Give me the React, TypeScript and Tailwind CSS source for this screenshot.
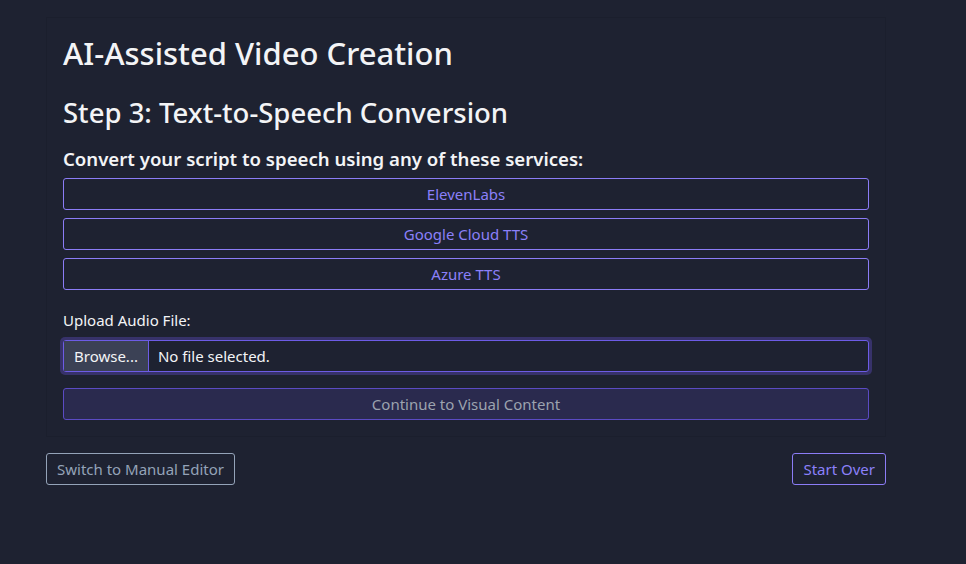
const services = ['ElevenLabs', 'Google Cloud TTS', 'Azure TTS']

export default function App() {
  return (
    <div className="min-h-[564px] bg-[#1e2231] pt-[17px] font-['Noto_Sans',sans-serif] text-[#f3f4f6]">
      <div className="ml-[46px] flex w-[840px] flex-col">
        <div className="border border-[#1b1f2d] px-4 pt-[15px] pb-4">
          <h1 className="text-[31px] leading-[40px] font-medium">AI-Assisted Video Creation</h1>
          <h2 className="mt-[23px] text-[27.5px] leading-[34px] font-medium">
            Step 3: Text-to-Speech Conversion
          </h2>
          <p className="mt-[16px] text-[18.6px] leading-[26px] font-semibold">
            Convert your script to speech using any of these services:
          </p>
          <div className="mt-[6px] flex flex-col gap-2">
            {services.map((s) => (
              <button
                key={s}
                className="h-[32px] w-full rounded-[3px] border border-[#8b7cf6] text-[15px] text-[#8b80f9]"
              >
                {s}
              </button>
            ))}
          </div>
          <label className="mt-[19px] block text-[15px] leading-[22px]">Upload Audio File:</label>
          <div className="-mx-[3px] mt-[6px] rounded-[5px] bg-[#37326a] p-[3px]">
            <div className="flex h-[32px] items-stretch rounded-[3px] border border-[#6d5ce6] bg-[#1e2231] text-[15px]">
              <span className="flex items-center border-r border-[#6d5ce6] bg-[#3b4155] px-[10px]">
                Browse...
              </span>
              <span className="flex items-center px-[9px]">No file selected.</span>
            </div>
          </div>
          <button className="mt-[13px] h-[32px] w-full rounded-[3px] border border-[#5b4bc4] bg-[#2a2a4e] text-[15px] text-[#9ca3af]">
            Continue to Visual Content
          </button>
        </div>
        <div className="mt-[16px] flex justify-between">
          <button className="h-[32px] rounded-[3px] border border-[#94a3b8] px-[10px] text-[15px] text-[#94a3b8]">
            Switch to Manual Editor
          </button>
          <button className="h-[32px] rounded-[3px] border border-[#8b7cf6] px-[10px] text-[15px] text-[#8b80f9]">
            Start Over
          </button>
        </div>
      </div>
    </div>
  )
}
